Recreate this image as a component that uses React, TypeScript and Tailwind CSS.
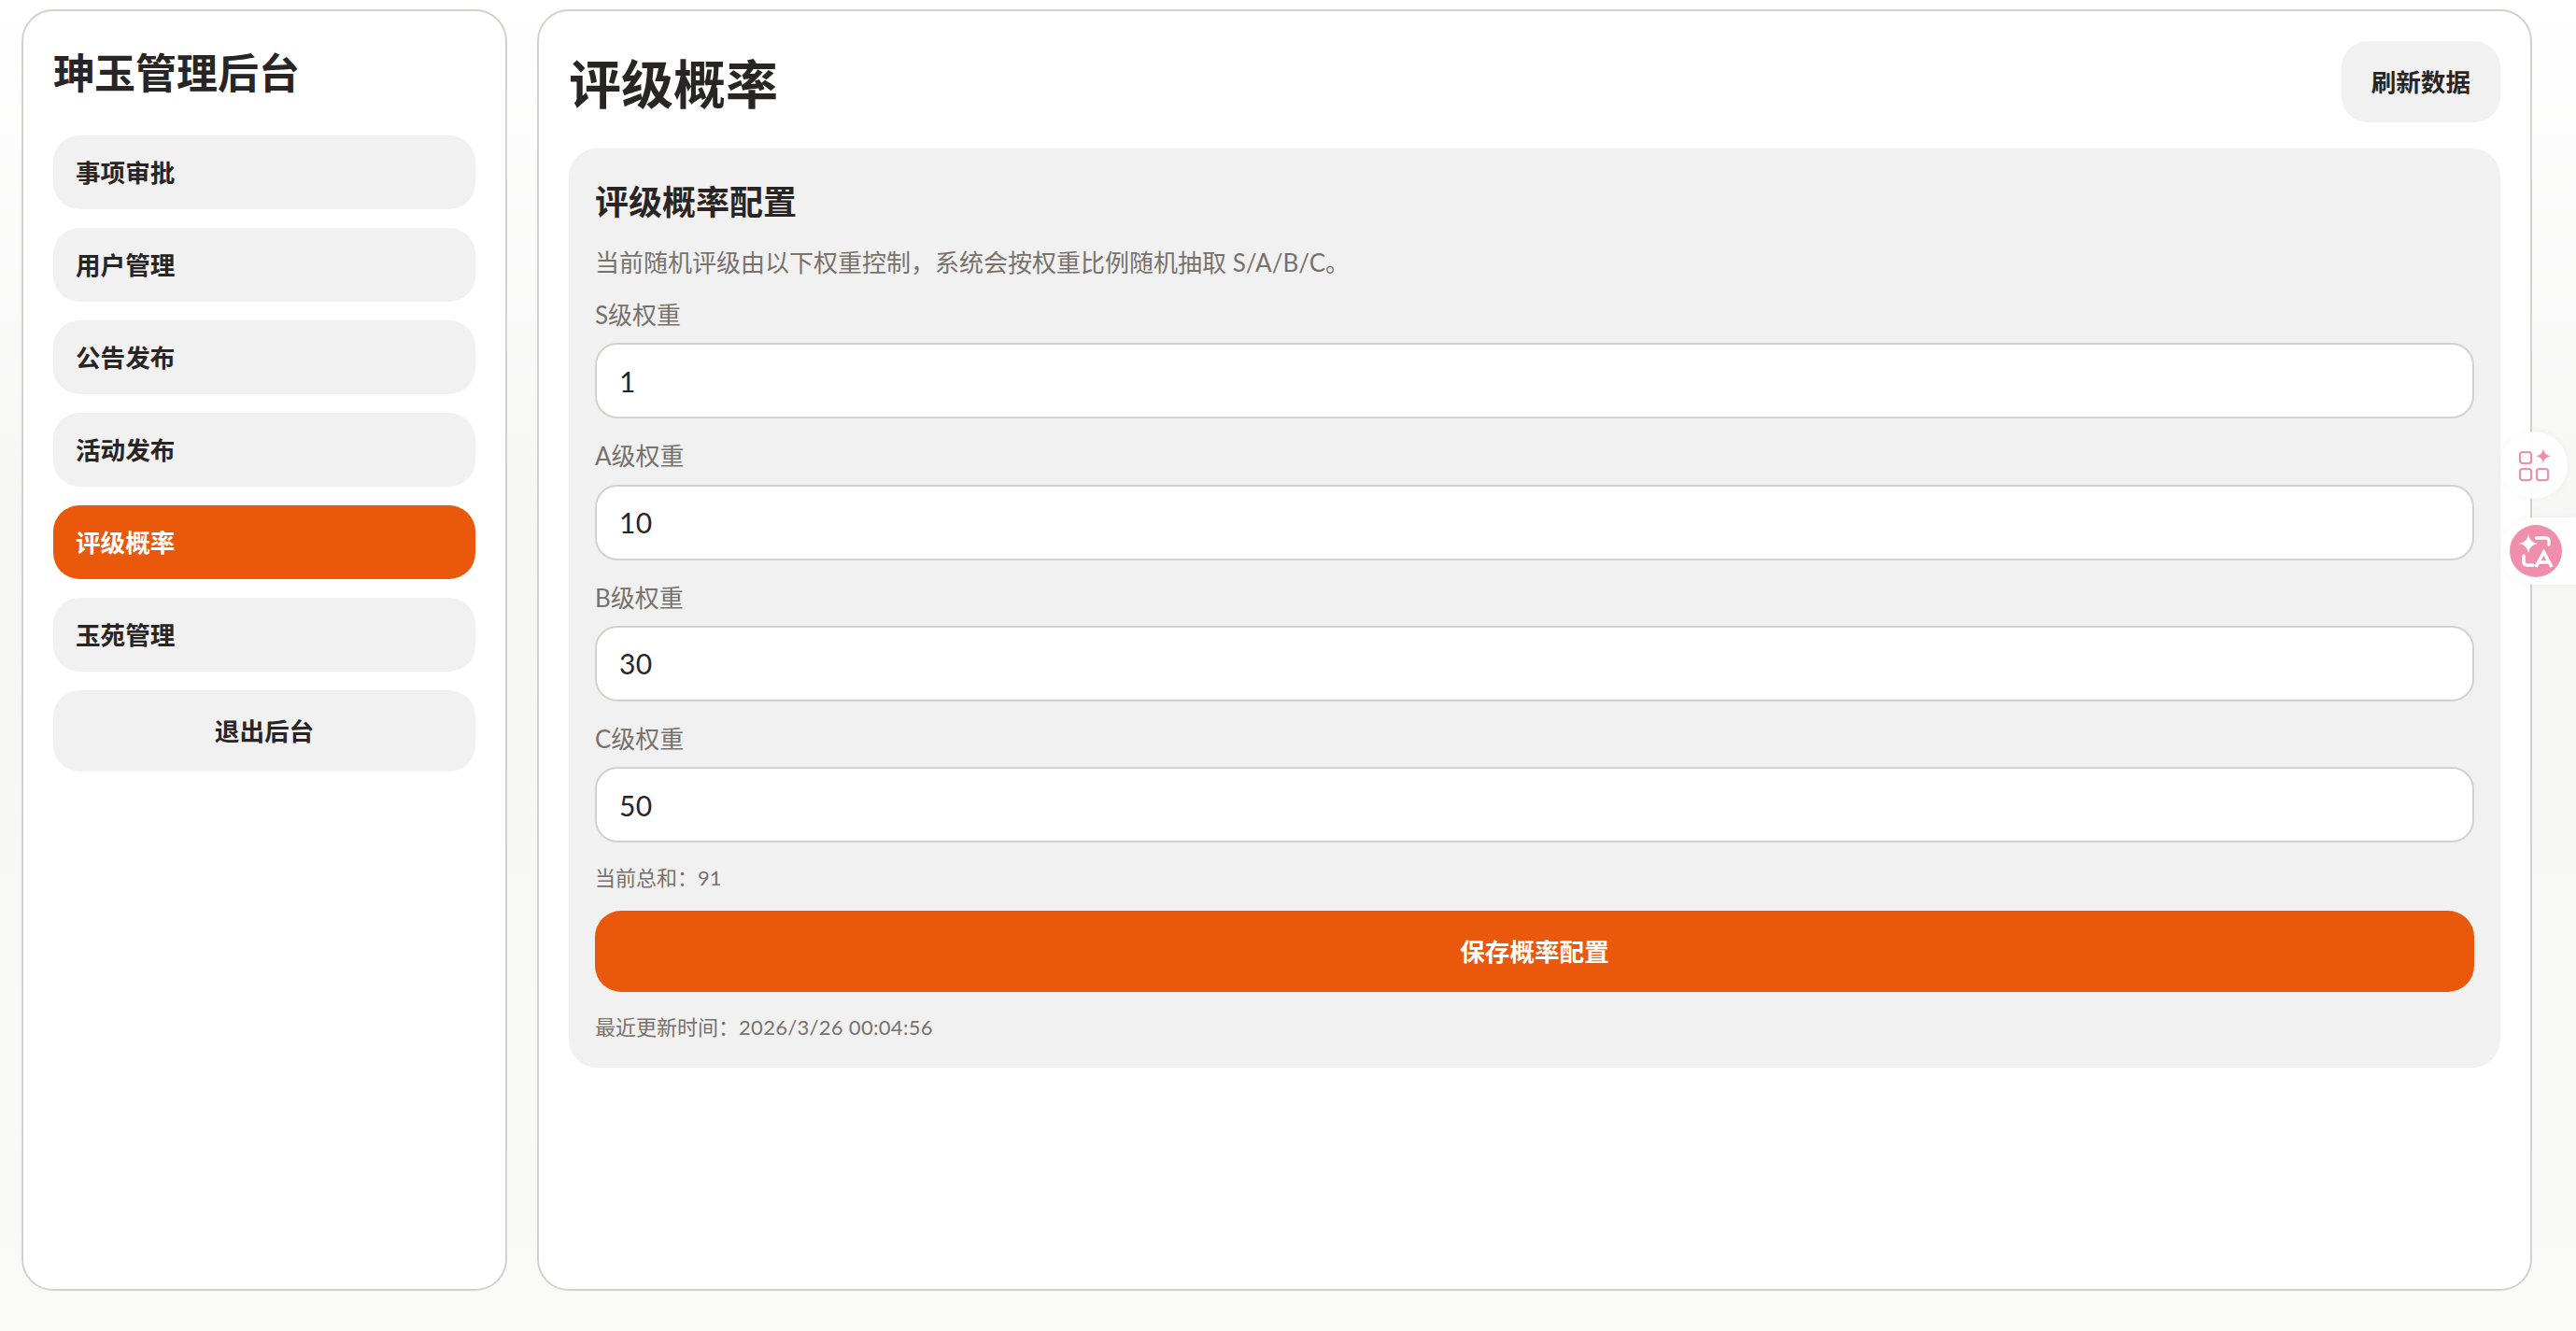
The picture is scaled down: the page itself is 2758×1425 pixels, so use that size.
import React from "react";

const navItems = ["事项审批", "用户管理", "公告发布", "活动发布", "评级概率", "玉苑管理"];
const fields = [
  { label: "S级权重", value: "1" },
  { label: "A级权重", value: "10" },
  { label: "B级权重", value: "30" },
  { label: "C级权重", value: "50" },
];

export default function App() {
  return (
    <div className="relative flex h-[1425px] w-[2758px] gap-[32px] overflow-hidden bg-gradient-to-b from-[#ffffff] via-[#f6f6f5] via-40% to-[#fafaf8] pl-[23px] pr-[47px] pt-[10px] pb-[43px] font-['Lato','Noto_Sans_CJK_SC',sans-serif]">
      <aside className="flex w-[520px] shrink-0 flex-col rounded-[34px] border-2 border-[#d4d0cd] bg-white px-[32px] pt-[33px]">
        <h1 className="mb-[34px] text-[44px] font-bold leading-[66px] text-[#292524]">珅玉管理后台</h1>
        <nav className="flex flex-col gap-[20px]">
          {navItems.map((n, i) => (
            <div
              key={n}
              className={`flex h-[79px] items-center rounded-[28px] px-[24px] pt-[3px] text-[26.6px] font-bold ${i === 4 ? "bg-[#ea580c] text-white" : "bg-[#f1f1f1] text-[#292524]"}`}
            >
              {n}
            </div>
          ))}
          <button className="h-[87px] rounded-[28px] bg-[#f1f1f1] pt-[3px] text-[26.6px] font-bold text-[#292524]">退出后台</button>
        </nav>
      </aside>
      <main className="flex min-w-0 flex-1 flex-col rounded-[34px] border-2 border-[#d4d0cd] bg-white px-[32px] pt-[32px]">
        <header className="mb-[28px] flex h-[87px] items-center justify-between">
          <h2 className="pt-[5px] text-[56px] font-bold leading-[84px] text-[#292524]">评级概率</h2>
          <button className="h-[87px] rounded-[28px] bg-[#f1f1f1] px-[32px] pt-[3px] text-[26.6px] font-bold text-[#292524]">刷新数据</button>
        </header>
        <section className="flex flex-col rounded-[30px] bg-[#f1f1f1] px-[28px] pt-[30px] pb-[26px]">
          <h3 className="mb-[19px] text-[36px] font-bold leading-[54px] text-[#292524]">评级概率配置</h3>
          <p className="mb-[17px] text-[26px] leading-[39px] text-[#78716c]">当前随机评级由以下权重控制，系统会按权重比例随机抽取 S/A/B/C。</p>
          {fields.map((f) => (
            <div key={f.label} className="mb-[21px] flex flex-col">
              <label className="mb-[10px] text-[26px] leading-[39.3px] text-[#78716c]">{f.label}</label>
              <input
                readOnly
                value={f.value}
                className="h-[81px] w-full rounded-[24px] border-2 border-[#d4d0cd] bg-white px-[24px] text-[30px] tracking-[0.3px] text-[#292524] outline-none"
              />
            </div>
          ))}
          <p className="mb-[18px] text-[22px] leading-[34px] text-[#78716c]">当前总和：91</p>
          <button className="h-[87px] w-full rounded-[28px] bg-[#ea580c] pt-[3px] text-[26.6px] font-bold text-white">保存概率配置</button>
          <p className="mt-[21px] text-[22px] leading-[34px] text-[#78716c]">
            最近更新时间：<span className="tracking-[0.3px]">2026/3/26 00:04:56</span>
          </p>
        </section>
      </main>
      <div className="absolute left-[2677px] top-[462px] flex h-[72px] w-[72px] items-center justify-center rounded-full bg-white/90 shadow-[0_0_8px_rgba(0,0,0,0.04)]">
        <svg width="36" height="36" viewBox="0 0 36 36" fill="none" stroke="#ef8fab" strokeWidth="2.2">
          <rect x="3" y="4" width="12" height="12" rx="2.5" />
          <rect x="3" y="22" width="12" height="12" rx="2.5" />
          <rect x="21" y="22" width="12" height="12" rx="2.5" />
          <path d="M28 0 C28.8 5 30.5 7 36 8.2 C30.5 9.5 28.8 11.5 28 16.5 C27.2 11.5 25.5 9.5 20 8.2 C25.5 7 27.2 5 28 0 Z" fill="#ef8fab" stroke="none" />
        </svg>
      </div>
      <div className="absolute left-[2677px] top-[554px] flex h-[72px] w-[81px] items-center rounded-l-[36px] bg-white/90 pl-[10px] shadow-[0_0_8px_rgba(0,0,0,0.04)]">
        <div className="flex h-[56px] w-[56px] items-center justify-center rounded-full bg-[#ef8fab]">
          <svg width="40" height="40" viewBox="0 0 40 40" fill="none">
            <path d="M12 1.5 C13.2 8 15.5 10.5 22.5 12 C15.5 13.5 13.2 16 12 22.5 C10.8 16 8.5 13.5 1.5 12 C8.5 10.5 10.8 8 12 1.5 Z" fill="white" />
            <path d="M20.5 6 H30.5 Q34 6 34 9.5 V13" stroke="white" strokeWidth="3.4" strokeLinecap="round" />
            <path d="M7 25 V31.5 Q7 35 10.5 35 H17" stroke="white" strokeWidth="3.4" strokeLinecap="round" />
            <path d="M20 37 L28.5 21 L37 37 M23 32 H34" stroke="white" strokeWidth="3.6" />
          </svg>
        </div>
      </div>
    </div>
  );
}
